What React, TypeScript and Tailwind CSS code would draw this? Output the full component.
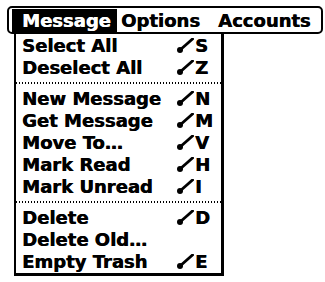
import React from "react";

type Item = { label: string; key?: string } | "sep";

const items: Item[] = [
  { label: "Select All", key: "S" },
  { label: "Deselect All", key: "Z" },
  "sep",
  { label: "New Message", key: "N" },
  { label: "Get Message", key: "M" },
  { label: "Move To…", key: "V" },
  { label: "Mark Read", key: "H" },
  { label: "Mark Unread", key: "I" },
  "sep",
  { label: "Delete", key: "D" },
  { label: "Delete Old…" },
  { label: "Empty Trash", key: "E" },
];

const font = { fontFamily: '"DejaVu Sans", Verdana, sans-serif' };

const CommandStroke = () => (
  <svg width="17" height="15" viewBox="0 0 17 15" className="shrink-0">
    <line x1="3" y1="12" x2="15.5" y2="1" stroke="#000" strokeWidth="2.8" strokeLinecap="square" />
    <circle cx="3" cy="12" r="3" fill="#000" />
  </svg>
);

export default function App() {
  return (
    <div
      className="w-[325px] h-[282px] bg-white overflow-hidden text-black font-bold text-[18px] tracking-[0px] [text-shadow:0.5px_0_0_currentColor]"
      style={font}
    >
      {/* menu bar */}
      <div className="ml-[7px] mt-[6px] w-[316px] h-[28px] border-2 border-black rounded-[5px] flex items-start">
        <div className="mt-[1px] ml-[3px] w-[105px] h-[23px] bg-black text-white pl-[10px] leading-[23px]">Message</div>
        <div className="mt-[1px] w-[97px] h-[23px] pl-[4px] leading-[23px]">Options</div>
        <div className="mt-[1px] h-[23px] pl-[4px] leading-[23px]">Accounts</div>
      </div>

      {/* dropdown */}
      <div className="ml-[14px] w-[210px] border-l-2 border-r-[3px] border-b-[3px] border-black pt-[1px]">
        {items.map((it, i) =>
          it === "sep" ? (
            <div key={i} className="h-[9px] flex items-center">
              <div className="w-full h-[2px] -mt-[1px] bg-[repeating-linear-gradient(90deg,#000_0_1.5px,transparent_1.5px_3px)]" />
            </div>
          ) : (
            <div key={i} className="h-[22px] leading-[22px] flex items-center">
              <div className="w-[161px] pl-[6px] whitespace-nowrap">{it.label}</div>
              {it.key && (
                <div className="flex items-center">
                  <div className="-mt-[1px]">
                    <CommandStroke />
                  </div>
                  <span className="ml-[1px]">{it.key}</span>
                </div>
              )}
            </div>
          )
        )}
      </div>
    </div>
  );
}
